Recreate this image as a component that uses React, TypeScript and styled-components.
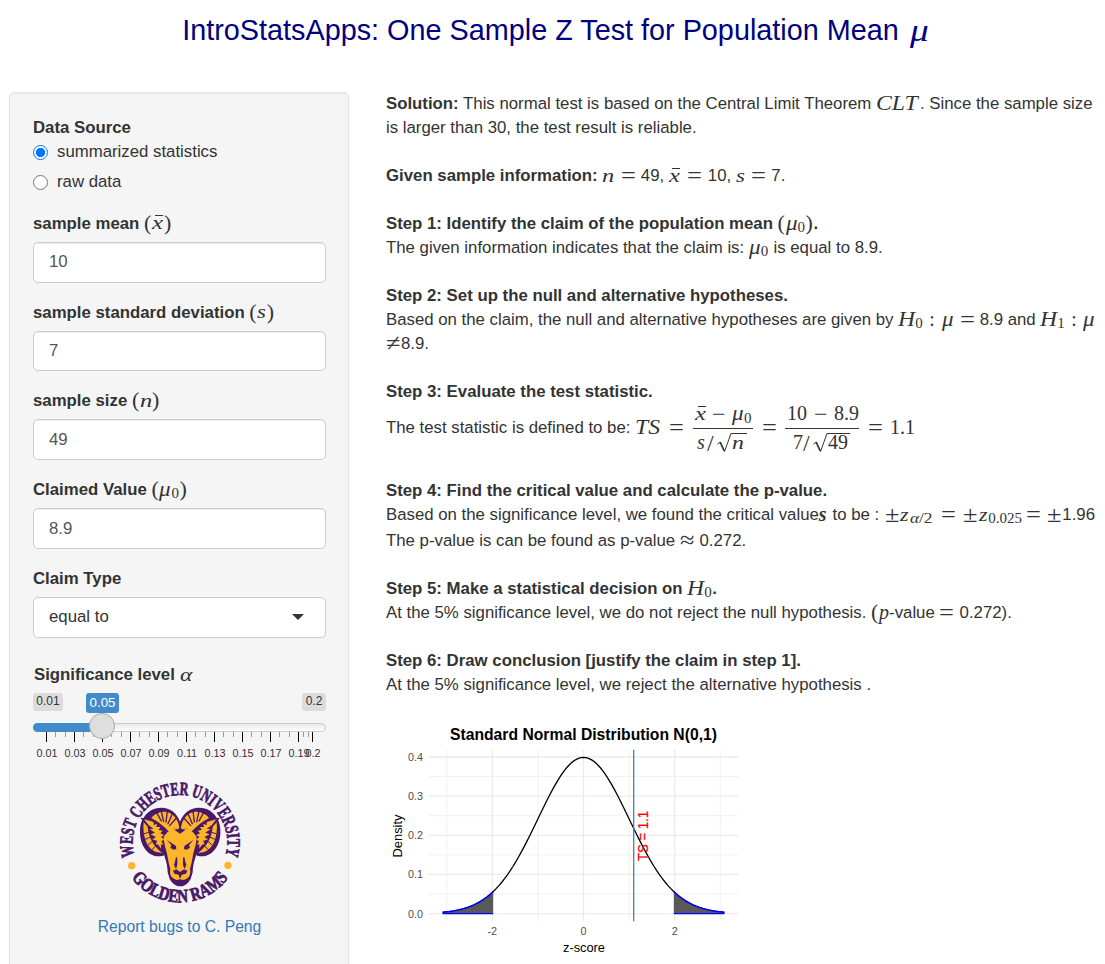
import React from "react";
import styled, { createGlobalStyle } from "styled-components";

const SANS = '"Liberation Sans", Arial, sans-serif';
const SERIF = '"Liberation Serif", "Times New Roman", serif';

const GlobalStyle = createGlobalStyle`
  *, *::before, *::after { box-sizing: border-box; }
  body {
    margin: 0;
    background: #fff;
    color: #333;
    font-family: ${SANS};
    font-size: 16.8px;
    line-height: 24px;
  }
`;

const Page = styled.div`
  display: flex;
  flex-direction: column;
  height: 964px;
  width: 1105px;
  overflow: hidden;
`;

const Title = styled.h3`
  flex: none;
  margin: 0;
  height: 92px;
  padding: 14px 0 0 5px;
  text-align: center;
  font-size: 28.8px;
  font-weight: 400;
  line-height: 32px;
  color: #000080;
  white-space: nowrap;
`;

const Columns = styled.div`
  display: flex;
  align-items: flex-start;
  gap: 37px;
  padding-left: 9px;
`;

const Sidebar = styled.form`
  display: flex;
  flex-direction: column;
  width: 340px;
  height: 900px;
  padding: 23px 22px 0 23px;
  background: #f5f5f5;
  border: 1px solid #e3e3e3;
  border-radius: 5px;
  box-shadow: inset 0 1px 1px rgba(0, 0, 0, 0.05);
`;

const Main = styled.main`
  display: flex;
  flex-direction: column;
  gap: 24px;
  width: 719px;
`;

const Section = styled.section`
  display: flex;
  flex-direction: column;
`;

const Label = styled.label`
  display: block;
  height: 24px;
  font-weight: 700;
  white-space: nowrap;
`;

const RadioGroup = styled.div`
  display: flex;
  flex-direction: column;
  gap: 6px;
  margin-bottom: 17.8px;
`;

const RadioRow = styled.label`
  display: flex;
  align-items: center;
  gap: 9px;
  height: 24px;
`;

const RadioMark = styled.span<{ $on?: boolean }>`
  width: 15px;
  height: 15px;
  border-radius: 50%;
  border: 1.3px solid ${(p) => (p.$on ? "#0075ff" : "#767676")};
  background: ${(p) => (p.$on ? "radial-gradient(circle, #0075ff 4.3px, #fff 5px)" : "#fff")};
`;

const Group = styled.div`
  display: flex;
  flex-direction: column;
  gap: 6px;
  margin-bottom: 18px;
`;

const Field = styled.div`
  display: flex;
  align-items: center;
  justify-content: space-between;
  height: 40.8px;
  padding: 0 21px 0 15px;
  border: 1px solid #ccc;
  border-radius: 5px;
  background: #fff;
  color: #555;
  box-shadow: inset 0 1px 1px rgba(0, 0, 0, 0.075);
`;

const SelectField = styled(Field)`
  color: #333;
  box-shadow: none;
`;

const Caret = styled.span`
  border: 6px solid transparent;
  border-top-color: #333;
  border-bottom-width: 0;
`;

const Slider = styled.div`
  display: flex;
  flex-direction: column;
  margin-top: 7.5px;
`;

const SliderLabel = styled(Label)`
  padding-left: 1px;
`;

const SliderHead = styled.div`
  display: flex;
  align-items: flex-start;
  height: 36px;
  padding-top: 6px;
  line-height: 16px;
`;

const Chip = styled.span<{ $w: number }>`
  width: ${(p) => p.$w}px;
  height: 18px;
  border-radius: 3px;
  background: #dcdcdc;
  text-align: center;
  font-size: 12px;
`;

const ValueChip = styled(Chip)`
  height: 20px;
  margin: 0 183px 0 23px;
  background: #428bca;
  color: #fff;
  font-size: 13.3px;
  line-height: 19px;
`;

const Track = styled.div`
  position: relative;
  width: 293px;
  height: 9px;
  border: 1px solid #ccc;
  border-radius: 9px;
  background: linear-gradient(#e8e8e8, #fff);
`;

const TrackFill = styled.div`
  width: 66px;
  height: 9px;
  margin: -1px 0 0 -1px;
  border-radius: 9px 0 0 9px;
  background: #428bca;
`;

const Handle = styled.div`
  position: absolute;
  z-index: 2;
  left: 55px;
  top: -11px;
  width: 26px;
  height: 26px;
  border: 1px solid #ababab;
  border-radius: 50%;
  background: #dedede;
`;

const Scale = styled.svg`
  display: block;
  overflow: visible;
`;

const Brand = styled.div`
  display: flex;
  flex-direction: column;
  align-items: center;
  gap: 10px;
  padding: 17px 0 0 0;
`;

const Logo = styled.svg`
  display: block;
  overflow: visible;
`;

const BugLink = styled.a`
  color: #337ab7;
  font-size: 15.65px;
`;

const Line = styled.div<{ $h?: number }>`
  height: ${(p) => p.$h ?? 24}px;
  white-space: pre;
`;

const Sym = styled.span<{ $w: number; $drop?: number; $size?: number; $up?: boolean; $bold?: boolean }>`
  display: inline-block;
  vertical-align: -${(p) => p.$drop ?? 0.5}px;
  width: ${(p) => p.$w}px;
  font-family: ${SERIF};
  font-size: ${(p) => p.$size ?? 20}px;
  font-style: ${(p) => (p.$up ? "normal" : "italic")};
  font-weight: ${(p) => (p.$bold ? 700 : 400)};
  line-height: 0;
  white-space: nowrap;
`;

const Wide = styled.span<{ $s?: number }>`
  display: inline-block;
  transform: scaleX(${(p) => p.$s ?? 1.2});
  transform-origin: left;
`;

const Bar = styled(Sym)`
  background: linear-gradient(#333, #333) 3px 2px / 8px 1px no-repeat;
  height: 14px;
  line-height: 19px;
`;

const Formula = styled.div`
  display: flex;
  align-items: center;
  height: 51px;
  padding-bottom: 3px;
  white-space: pre;
`;

const Fraction = styled.span<{ $w: number }>`
  display: flex;
  flex-direction: column;
  width: ${(p) => p.$w}px;
  margin-right: 9px;
`;

const Numer = styled.span`
  height: 27px;
  padding: 0 2px;
  border-bottom: 1px solid #333;
  line-height: 25px;
`;

const Denom = styled.span<{ $pad: number }>`
  height: 26px;
  line-height: 29px;
  padding-left: ${(p) => p.$pad}px;
`;

const Radical = styled.svg`
  display: inline-block;
  overflow: visible;
  vertical-align: -4px;
`;

const Plot = styled.svg`
  display: block;
  margin-top: -1px;
  font-family: ${SANS};
`;

const Op = ({ children, w = 15, s = 1.1 }: { children: string; w?: number; s?: number }) => (
  <Sym $w={w} $drop={2} $up $size={24}><Wide $s={s}>{children}</Wide></Sym>
);
const Eq = ({ w = 20 }: { w?: number }) => <Op w={w}>=</Op>;
const Mu = ({ w = 12.5 }: { w?: number }) => (
  <Sym $w={w}><Wide $s={1.15}>μ</Wide></Sym>
);
const XBar = ({ w = 13 }: { w?: number }) => (
  <Bar $w={w} $size={19}><Wide $s={1.3}>x</Wide></Bar>
);
const N = ({ w = 12 }: { w?: number }) => (
  <Sym $w={w} $size={19}><Wide $s={1.28}>n</Wide></Sym>
);
const Sub = ({ children, w = 9 }: { children: React.ReactNode; w?: number }) => (
  <Sym $w={w} $drop={3} $up $size={15}>{children}</Sym>
);
const Paren = ({ children, w = 8 }: { children: string; w?: number }) => (
  <Sym $w={w} $drop={1} $up $size={22}>{children}</Sym>
);

const Root = ({ w }: { w: number }) => (
  <Radical width={16} height={20} viewBox="0 0 16 20">
    <path d={`M1.5 11 L4.5 9 L8.5 18.5 L15 0.5 H${16 + w}`} fill="none" stroke="#333" strokeWidth="1" />
    <path d="M4.2 9.5 L8.2 18" stroke="#333" strokeWidth="1.6" />
  </Radical>
);

const ticks = [0.01, 0.03, 0.05, 0.07, 0.09, 0.11, 0.13, 0.15, 0.17, 0.19];

function SliderScale() {
  const major = ticks.map((_, i) => 13.5 + i * 28);
  const minor = major.slice(0, -1).flatMap((x) => [x + 9.3, x + 18.7]);
  return (
    <Scale width={293} height={30}>
      {minor.concat([270.6, 275.4]).map((x) => (
        <rect key={x} x={Math.round(x - 0.5)} y={0} width={1} height={5} fill="#999" />
      ))}
      {major.concat([279.5]).map((x) => (
        <rect key={x} x={x - 0.5} y={0} width={1} height={10} fill="#000" />
      ))}
      <g fontSize="10.8" fill="#333" textAnchor="middle">
        {ticks.map((t, i) => (
          <text key={t} x={14 + i * 28} y={25}>{t}</text>
        ))}
        <text x={280} y={25}>0.2</text>
      </g>
    </Scale>
  );
}

const PURPLE = "#4b1869";
const GOLD = "#fdb529";

const HornHalf = () => (
  <g>
    <path fill={GOLD} d="M151 147 C162 133 178 126 196 129 C213 132 226 145 232 163 L237 185 L221 176 L205 190 C194 176 176 162 151 147Z" />
    <path fill={GOLD} d="M128 160 C124 201 137 239 165 249 L184 252 C166 236 151 207 143 171Z" />
    <g stroke={PURPLE} strokeWidth="4" strokeLinecap="round">
      <path d="M167 131 L181 156" />
      <path d="M181 127 L188 158" />
      <path d="M199 126 L195 159" />
      <path d="M214 134 L201 164" />
      <path d="M226 147 L206 170" />
      <path d="M130 194 L144 190 M133 211 L148 204 M141 228 L156 216 M153 242 L166 229" strokeWidth="3" />
    </g>
    <path fill={PURPLE} d="M118 146 L153 151 C180 160 199 182 196 214 C195 235 190 246 181 250 C160 233 143 209 140 174Z" />
    <path fill={GOLD} d="M129 151 L151 157 L158 160 L158 168 L168 165 L166 174 L178 174 L173 183 L185 185 L178 193 L189 198 L180 204 L190 212 L181 216 L187 227 L180 226 L180 239 L172 227 L164 225 L169 216 L154 211 L165 204 L149 196 L162 191 L146 180 L158 179 L143 169Z" />
  </g>
);

function RamLogo() {
  return (
    <Logo width={126} height={126} viewBox="48 30 378 378">
      <defs>
        <path id="arcTop" d="M101.2 261.5 A142 142 0 1 1 372.8 261.5" />
        <path id="arcBottom" d="M91.5 325.8 A180 180 0 0 0 382.5 325.8" />
      </defs>
      <g fontFamily={SERIF} fontWeight="700" fill={PURPLE} stroke={PURPLE} strokeWidth="2.4">
        <text fontSize="56">
          <textPath href="#arcTop" textLength="528" lengthAdjust="spacingAndGlyphs">WEST CHESTER UNIVERSITY</textPath>
        </text>
        <text fontSize="56">
          <textPath href="#arcBottom" textLength="338" lengthAdjust="spacingAndGlyphs">GOLDEN RAMS</textPath>
        </text>
      </g>
      <circle cx="92" cy="290" r="11" fill={GOLD} />
      <circle cx="381" cy="289" r="11" fill={GOLD} />
      <path
        fill={PURPLE}
        d="M237 158 C228 130 205 116 182 116 C155 116 136 130 127 148 C118 162 116 178 117 195 C119 232 142 262 172 262 C180 262 186 261 190 258 C193 275 199 280 200 310 L206 330 C215 345 225 352 238 352 C251 352 260 345 269 330 L275 310 C276 280 282 275 285 258 C289 261 295 262 303 262 C333 262 356 232 358 195 C359 178 357 162 348 148 C339 130 320 116 293 116 C270 116 247 130 237 158Z"
      />
      <HornHalf />
      <g transform="translate(475 0) scale(-1 1)"><HornHalf /></g>
      <path
        fill={GOLD}
        d="M199 190 L222 176 L237 192 L252 176 L276 190 L287 203 C286 228 279 243 276 258 C273 275 272 284 267 299 C269 310 268 320 260 327 L249 333 L237 328 L226 333 L214 326 C207 320 206 309 208 299 C203 284 202 275 199 258 C196 243 189 228 188 203Z"
      />
      <g fill={PURPLE}>
        <path d="M220 182 L237 194 L254 182 L243 181 L237 174 L231 181Z" />
        <path d="M198 213 L225 231 L226 240 L218 242 L208 236 L211 229Z" />
        <path d="M277 213 L250 231 L249 240 L257 242 L267 236 L264 229Z" />
        <path d="M225 264 L229 266 L229 287 L225 300 L219 288 L222 278Z" />
        <path d="M250 264 L246 266 L246 287 L250 300 L256 288 L253 278Z" />
        <path d="M216 305 L226 301 L237 309 L249 301 L259 305 L255 314 L242 317 L239 328 H236 L233 317 L220 314Z" />
      </g>
      <path d="M217 325 C223 316 230 318 237 329 C244 318 251 316 258 325 C250 332 243 334 237 331 C231 334 224 332 217 325Z" fill={GOLD} />
    </Logo>
  );
}

const px = (z: number) => 197.5 + z * 45.6;
const py = (d: number) => 193.6 - d * 391.5;
const pdf = (z: number) => Math.exp((-z * z) / 2) / Math.sqrt(2 * Math.PI);

function curve(from: number, to: number) {
  const pts: string[] = [];
  for (let i = 0; i <= 100; i++) {
    const z = from + ((to - from) * i) / 100;
    pts.push(`${px(z).toFixed(2)},${py(pdf(z)).toFixed(2)}`);
  }
  return pts.join(" L");
}

function DensityPlot() {
  const tail = (a: number, b: number) => `M${px(a)},${py(0)} L${curve(a, b)} L${px(b)},${py(0)} Z`;
  return (
    <Plot width={360} height={244} viewBox="0 0 360 244">
      {[0.05, 0.15, 0.25, 0.35].map((d) => (
        <path key={d} d={`M42.7 ${py(d)} H352.5`} stroke="#ebebeb" strokeWidth="0.7" />
      ))}
      {[-3, -1, 1, 3].map((z) => (
        <path key={z} d={`M${px(z)} 29.7 V201.3`} stroke="#ebebeb" strokeWidth="0.7" />
      ))}
      {[0, 0.1, 0.2, 0.3, 0.4].map((d) => (
        <path key={d} d={`M42.7 ${py(d)} H352.5`} stroke="#ebebeb" strokeWidth="1.3" />
      ))}
      {[-2, 0, 2].map((z) => (
        <path key={z} d={`M${px(z)} 29.7 V201.3`} stroke="#ebebeb" strokeWidth="1.3" />
      ))}
      <path d={`M${curve(-3.09, 3.09)}`} fill="none" stroke="#000" strokeWidth="1.3" />
      {[[-3.09, -1.98], [1.98, 3.09]].map(([a, b]) => (
        <g key={a}>
          <path d={tail(a, b)} fill="#595959" />
          <path d={`M${curve(a, b)}`} fill="none" stroke="#00f" strokeWidth="1.5" />
          <path d={`M${px(a)} ${py(0)} H${px(b)}`} stroke="#00f" strokeWidth="1.3" />
        </g>
      ))}
      <text transform="translate(261.5 141) rotate(-90)" fontSize="14.2" fill="#f00" stroke="#f00" strokeWidth="0.25" textLength="50" lengthAdjust="spacingAndGlyphs">TS = 1.1</text>
      <path d="M247.7 29.7 V201.3" stroke="#4682b4" strokeWidth="1.3" />
      <text x="197.5" y="19.5" fontSize="15.6" fontWeight="700" textAnchor="middle" textLength="267" lengthAdjust="spacingAndGlyphs" fill="#000">
        Standard Normal Distribution N(0,1)
      </text>
      <g fontSize="10.8" fill="#4d4d4d">
        {["0.0", "0.1", "0.2", "0.3", "0.4"].map((t, i) => (
          <text key={t} x="37" y={py(i / 10) + 4} textAnchor="end">{t}</text>
        ))}
        {[-2, 0, 2].map((z) => (
          <text key={z} x={px(z)} y="215" textAnchor="middle">{z}</text>
        ))}
      </g>
      <text x="198" y="232" fontSize="13" textAnchor="middle" textLength="42" lengthAdjust="spacingAndGlyphs" fill="#000">z-score</text>
      <text transform="translate(16 116) rotate(-90)" fontSize="13" textAnchor="middle" textLength="43" lengthAdjust="spacingAndGlyphs" fill="#000">Density</text>
    </Plot>
  );
}

export default function App() {
  return (
    <Page>
      <GlobalStyle />
      <Title>
        IntroStatsApps: One Sample Z Test for Population Mean{" "}
        <Sym $w={21} $drop={0.5} $size={31}><Wide $s={1.2}>μ</Wide></Sym>
      </Title>
      <Columns>
        <Sidebar>
          <Label>Data Source</Label>
          <RadioGroup>
            <RadioRow><RadioMark $on />summarized statistics</RadioRow>
            <RadioRow><RadioMark />raw data</RadioRow>
          </RadioGroup>
          <Group>
            <Label>sample mean <Paren>(</Paren><XBar w={12} /><Paren>)</Paren></Label>
            <Field>10</Field>
          </Group>
          <Group>
            <Label>sample standard deviation <Paren>(</Paren><Sym $w={9.5} $size={19}><Wide>s</Wide></Sym><Paren>)</Paren></Label>
            <Field>7</Field>
          </Group>
          <Group>
            <Label>sample size <Paren>(</Paren><N /><Paren>)</Paren></Label>
            <Field>49</Field>
          </Group>
          <Group>
            <Label>Claimed Value <Paren>(</Paren><Mu w={12} /><Sub w={8}>0</Sub><Paren>)</Paren></Label>
            <Field>8.9</Field>
          </Group>
          <Group>
            <Label>Claim Type</Label>
            <SelectField>equal to<Caret /></SelectField>
          </Group>
          <Slider>
            <SliderLabel>Significance level <Sym $w={14} $size={18}><Wide $s={1.3}>α</Wide></Sym></SliderLabel>
            <SliderHead>
              <Chip $w={30}>0.01</Chip>
              <ValueChip $w={33}>0.05</ValueChip>
              <Chip $w={24}>0.2</Chip>
            </SliderHead>
            <Track>
              <TrackFill />
              <Handle />
            </Track>
            <SliderScale />
          </Slider>
          <Brand>
            <RamLogo />
            <BugLink>Report bugs to C. Peng</BugLink>
          </Brand>
        </Sidebar>
        <Main>
          <Section>
            <Line><b>Solution:</b> This normal test is based on the Central Limit Theorem <Sym $w={44} $size={20.5}><Wide $s={1.16}>CLT</Wide></Sym>. Since the sample size</Line>
            <Line>is larger than 30, the test result is reliable.</Line>
          </Section>
          <Section>
            <Line><b>Given sample information:</b> <N w={18.5} /><Eq />49, <XBar w={18} /><Eq w={21} />10, <Sym $w={15.5} $size={19}><Wide>s</Wide></Sym><Eq />7.</Line>
          </Section>
          <Section>
            <Line><b>Step 1: Identify the claim of the population mean <Paren>(</Paren><Mu w={12} /><Sub w={8}>0</Sub><Paren>)</Paren>.</b></Line>
            <Line>The given information indicates that the claim is: <Mu w={12} /><Sub w={8}>0</Sub> is equal to 8.9.</Line>
          </Section>
          <Section>
            <Line><b>Step 2: Set up the null and alternative hypotheses.</b></Line>
            <Line>Based on the claim, the null and alternative hypotheses are given by <Sym $w={17}><Wide $s={1.18}>H</Wide></Sym><Sub w={14}>0</Sub><Sym $w={12.5} $up>:</Sym><Mu w={18} /><Eq />8.9 and <Sym $w={17}><Wide $s={1.18}>H</Wide></Sym><Sub w={14}>1</Sub><Sym $w={12} $up>:</Sym><Mu w={12} /></Line>
            <Line><Op>≠</Op>8.9.</Line>
          </Section>
          <Section>
            <Line><b>Step 3: Evaluate the test statistic.</b></Line>
            <Formula>
              <span>The test statistic is defined to be: <Sym $w={34}><Wide $s={1.18}>TS</Wide></Sym><Eq w={24} /></span>
              <Fraction $w={60}>
                <Numer><XBar w={17} /><Op w={20} s={1}>−</Op><Mu w={12} /><Sub w={7}>0</Sub></Numer>
                <Denom $pad={4}><Sym $w={10}>s</Sym><Sym $w={9} $drop={2} $up $size={24}>/</Sym><Root w={15} /><Sym $w={14} $size={19}><Wide $s={1.25}>n</Wide></Sym></Denom>
              </Fraction>
              <span><Eq w={23} /></span>
              <Fraction $w={74}>
                <Numer><Sym $w={27} $up>10</Sym><Op w={20} s={1}>−</Op><Sym $w={25} $up>8.9</Sym></Numer>
                <Denom $pad={8}><Sym $w={10} $up>7</Sym><Sym $w={9} $drop={2} $up $size={24}>/</Sym><Root w={22} /><Sym $w={22} $up>49</Sym></Denom>
              </Fraction>
              <span><Eq w={22} /><Sym $w={26} $up>1.1</Sym></span>
            </Formula>
          </Section>
          <Section>
            <Line><b>Step 4: Find the critical value and calculate the p-value.</b></Line>
            <Line $h={26}>Based on the significance level, we found the critical value<Sym $w={9} $bold>s</Sym> to be : <Sym $w={1} /><Op w={15.5}>±</Op><Sym $w={10} $size={19}><Wide $s={1.15}>z</Wide></Sym><Sub w={31}><Wide $s={1.15}><i>α</i>/2</Wide></Sub><Eq w={22} /><Op w={16}>±</Op><Sym $w={9} $size={19}><Wide $s={1.15}>z</Wide></Sym><Sub w={38}>0.025</Sub><Eq w={21} /><Op>±</Op>1.96</Line>
            <Line>The p-value is can be found as p-value <Op>≈</Op> 0.272.</Line>
          </Section>
          <Section>
            <Line><b>Step 5: Make a statistical decision on <Sym $w={17}><Wide $s={1.18}>H</Wide></Sym><Sub w={8}>0</Sub>.</b></Line>
            <Line>At the 5% significance level, we do not reject the null hypothesis. <Paren>(</Paren><Sym $w={10}>p</Sym>-value <Eq w={15.5} /> 0.272).</Line>
          </Section>
          <Section>
            <Line><b>Step 6: Draw conclusion [justify the claim in step 1].</b></Line>
            <Line>At the 5% significance level, we reject the alternative hypothesis .</Line>
          </Section>
          <DensityPlot />
        </Main>
      </Columns>
    </Page>
  );
}
